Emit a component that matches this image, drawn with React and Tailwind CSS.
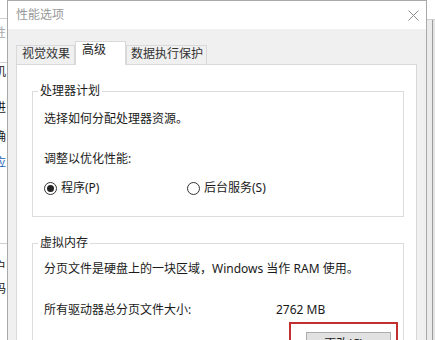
import React from "react";

const Radio = ({ checked, label }) => (
  <div className="flex items-center gap-[4px]">
    <span className="flex h-[13px] w-[13px] items-center justify-center rounded-full border border-[#333] bg-white">
      {checked && <span className="h-[7px] w-[7px] rounded-full bg-[#222]" />}
    </span>
    <span>{label}</span>
  </div>
);

const GroupBox = ({ title, className, children }) => (
  <div className={`relative border border-[#dcdcdc] ${className}`}>
    <span className="absolute left-[5px] top-[-9px] bg-white px-[2px] leading-[16px]">{title}</span>
    {children}
  </div>
);

export default function App() {
  return (
    <div className="relative h-[340px] w-[435px] overflow-hidden bg-white font-['Noto_Sans','Noto_Sans_CJK_SC',sans-serif] text-[12px] leading-[16px] text-[#1a1a1a]">
      {/* window behind, left edge */}
      <div className="absolute left-0 top-0 flex h-full w-[7px] flex-col overflow-hidden bg-white">
        <div className="h-[19px] shrink-0 border-b border-[#cfcfcf]" />
        <div className="ml-[-6px] mt-[6px] shrink-0 text-[#aaa]">性</div>
        <div className="mt-[21px] h-px shrink-0 bg-[#cfcfcf]" />
        <div className="ml-[-6px] mt-[1px] shrink-0">机</div>
        <div className="ml-[-6px] mt-[20px] shrink-0">进</div>
        <div className="ml-[-6px] mt-[13px] shrink-0">确</div>
        <div className="ml-[-6px] mt-[10px] shrink-0 text-[#1a5fb4]">应</div>
        <div className="mt-[72px] h-px shrink-0 bg-[#cfcfcf]" />
        <div className="ml-[-6px] mt-[15px] shrink-0">户</div>
        <div className="ml-[-6px] mt-[6px] shrink-0">码</div>
      </div>

      {/* window behind, right edge */}
      <div className="absolute right-0 top-0 flex h-full w-[8px] flex-col">
        <div className="h-[20px] shrink-0 border-b border-[#cfcfcf] bg-white" />
        <div className="flex flex-1">
          <div className="w-[5px] bg-[#ebebeb]" />
          <div className="w-px bg-[#9c9c9c]" />
          <div className="flex-1 bg-[#e4e4e4]" />
        </div>
      </div>

      {/* dialog */}
      <div className="absolute left-[7px] top-0 flex h-[400px] w-[420px] flex-col border border-[#a9a9a9] bg-[#f0f0f0]">
        <div className="flex h-[28px] shrink-0 items-center justify-between bg-white pl-[8px] pr-[7px]">
          <span className="text-[#999]">性能选项</span>
          <svg width="11" height="11" viewBox="0 0 11 11" fill="none" stroke="#8a8a8a" strokeWidth="1">
            <path d="M0.5 0.5 L10.5 10.5 M10.5 0.5 L0.5 10.5" />
          </svg>
        </div>

        <div className="flex flex-1 flex-col pl-[8px] pr-[9px] pt-[12px]">
          {/* tabs */}
          <div className="flex h-[23px] shrink-0 items-end">
            <div className="flex h-[19px] w-[59px] items-start border border-b-0 border-[#d9d9d9] bg-[#f0f0f0] pl-[5px] text-[#333]">
              视觉效果
            </div>
            <div className="relative z-10 mb-[-1px] flex h-[24px] w-[51px] items-start border border-b-0 border-[#d9d9d9] bg-white pl-[6px]">
              高级
            </div>
            <div className="flex h-[19px] w-[81px] items-start border border-b-0 border-[#d9d9d9] bg-[#f0f0f0] pl-[4px] text-[#333]">
              数据执行保护
            </div>
          </div>

          {/* tab panel */}
          <div className="flex flex-1 flex-col border border-[#d9d9d9] bg-white pl-[15px] pr-[12px] pt-[26px]">
            <GroupBox title="处理器计划" className="h-[126px] shrink-0 pl-[11px] pt-[19px]">
              <div>选择如何分配处理器资源。</div>
              <div className="mt-[24px]">调整以优化性能:</div>
              <div className="mt-[13px] flex">
                <div className="w-[143px]">
                  <Radio checked label="程序(P)" />
                </div>
                <Radio label="后台服务(S)" />
              </div>
            </GroupBox>

            <GroupBox title="虚拟内存" className="mt-[26px] flex-1 pl-[11px] pt-[17px]">
              <div>分页文件是硬盘上的一块区域，Windows 当作 RAM 使用。</div>
              <div className="mt-[25px] flex">
                <span className="w-[232px]">所有驱动器总分页文件大小:</span>
                <span>2762 MB</span>
              </div>
              <div className="mt-[4px] flex justify-end pr-[5px]">
                <div className="border-2 border-[#c0302e] pb-[6px] pl-[15px] pr-[5px] pt-[8px]">
                  <div className="flex h-[23px] w-[85px] items-center justify-center border border-[#adadad] bg-[#e1e1e1]">
                    更改(C)...
                  </div>
                </div>
              </div>
            </GroupBox>
          </div>
        </div>
      </div>
    </div>
  );
}
